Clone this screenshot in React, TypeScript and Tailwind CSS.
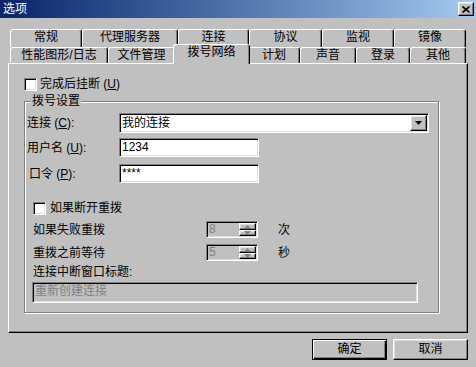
const raised =
  "border border-t-white border-l-white border-r-black border-b-black shadow-[inset_-1px_-1px_0_#808080,inset_1px_1px_0_#dfdfdf] bg-[#c0c0c0]";
const sunken =
  "border border-t-[#808080] border-l-[#808080] border-r-white border-b-white shadow-[inset_1px_1px_0_#000,inset_-1px_-1px_0_#dfdfdf]";

const Tab = ({ label, w, active }: { label: string; w: string; active?: boolean }) => {
  return (
    <div
      className={`${w} ${
        active ? "relative z-10 -mx-[2px] -mb-[1px] h-[20px]" : "h-full"
      } shrink-0 rounded-t-[3px] border-t border-l border-r border-t-white border-l-white border-r-black shadow-[inset_-1px_0_0_#808080] bg-[#c0c0c0] pt-[1px] text-center leading-[13px] whitespace-nowrap`}
    >
      {label}
    </div>
  );
};

const Check = () => <div className={`${sunken} size-[13px] bg-white shrink-0`}></div>;

const Arrow = ({ up, color }: { up?: boolean; color: string }) => (
  <svg width="7" height="4" viewBox="0 0 7 4">
    <path d={up ? "M3.5 0 L7 4 L0 4 Z" : "M0 0 L7 0 L3.5 4 Z"} fill={color} />
  </svg>
);

const Spin = ({ value }: { value: string }) => {
  return (
    <div className={`${sunken} w-[52px] h-[17px] flex bg-[#c0c0c0] p-[1px]`}>
      <span className="flex-1 pl-[1px] text-[#808080] leading-[13px]">{value}</span>
      <div className="w-[17px] flex flex-col">
        <div className={`${raised} h-[7px] flex items-center justify-center`}>
          <Arrow up color="#808080" />
        </div>
        <div className={`${raised} h-[6px] flex items-center justify-center`}>
          <Arrow color="#808080" />
        </div>
      </div>
    </div>
  );
};

const App = () => {
  return (
    <div className="w-[476px] h-[367px] overflow-hidden bg-[#c0c0c0] flex flex-col text-[12px] text-black font-['Liberation_Sans','Noto_Sans_CJK_SC',sans-serif]">
      {/* title bar */}
      <div className="h-[18px] shrink-0 flex items-center justify-between pl-[3px] pr-[2px] bg-gradient-to-r from-[#0a246a] to-[#a6caf0]">
        <span className="text-white leading-[13px]">选项</span>
        <div className={`${raised} w-[16px] h-[14px] flex items-center justify-center`}>
          <svg width="8" height="7" viewBox="0 0 8 7">
            <path d="M0.5 0.5 L7.5 6.5 M7.5 0.5 L0.5 6.5" stroke="#000" strokeWidth="1.6" />
          </svg>
        </div>
      </div>

      {/* tabs */}
      <div className="mt-[11px] pl-[10px] flex h-[18px] shrink-0">
        <Tab label="常规" w="w-[72px]" />
        <Tab label="代理服务器" w="w-[96px]" />
        <Tab label="连接" w="w-[71px]" />
        <Tab label="协议" w="w-[73px]" />
        <Tab label="监视" w="w-[72px]" />
        <Tab label="镜像" w="w-[72px]" />
      </div>
      <div className="pl-[10px] flex items-end h-[16px] shrink-0">
        <Tab label="性能图形/日志" w="w-[98px]" />
        <Tab label="文件管理" w="w-[67px]" />
        <Tab label="拨号网络" w="w-[77px]" active />
        <Tab label="计划" w="w-[52px]" />
        <Tab label="声音" w="w-[56px]" />
        <Tab label="登录" w="w-[54px]" />
        <Tab label="其他" w="w-[56px]" />
      </div>

      {/* panel */}
      <div className="ml-[8px] w-[460px] h-[270px] shrink-0 border border-t-white border-l-white border-r-black border-b-black shadow-[inset_-1px_-1px_0_#808080] pl-[15px] flex flex-col">
        <div className="mt-[14px] flex items-center gap-[3px] h-[13px]">
          <Check />
          <span className="leading-[13px]">
            完成后挂断 (<u>U</u>)
          </span>
        </div>

        {/* group box */}
        <div className="mt-[10px] w-[415px] border border-[#808080] shadow-[inset_1px_1px_0_#fff,1px_1px_0_#fff] flex flex-col pb-[9px]">
          <span className="-mt-[7px] ml-[6px] px-[1px] self-start bg-[#c0c0c0] leading-[13px]">拨号设置</span>

          <div className="mt-[5px] pl-[2px] flex items-center h-[20px]">
            <span className="w-[92px]">
              连接 (<u>C</u>):
            </span>
            <div className={`${sunken} w-[310px] h-[20px] bg-white flex items-center py-[1px] pr-[1px]`}>
              <span className="flex-1 pl-[2px] leading-[13px]">我的连接</span>
              <div className={`${raised} w-[17px] h-full flex items-center justify-center`}>
                <Arrow color="#000" />
              </div>
            </div>
          </div>

          <div className="mt-[5px] pl-[2px] flex items-center h-[19px]">
            <span className="w-[92px]">
              用户名 (<u>U</u>):
            </span>
            <div className={`${sunken} w-[140px] h-[19px] bg-white flex items-center pl-[2px] leading-[13px]`}>1234</div>
          </div>

          <div className="mt-[7px] pl-[2px] flex items-center h-[19px]">
            <span className="w-[92px] pl-[2px]">
              口令 (<u>P</u>):
            </span>
            <div className={`${sunken} w-[140px] h-[19px] bg-white flex items-center pl-[2px] leading-[13px]`}>****</div>
          </div>

          <div className="mt-[19px] pl-[8px] flex items-center gap-[4px] h-[13px]">
            <Check />
            <span className="leading-[13px]">如果断开重拨</span>
          </div>

          <div className="mt-[6px] pl-[8px] flex items-center h-[17px]">
            <span className="w-[173px]">如果失败重拨</span>
            <Spin value="8" />
            <span className="ml-[20px]">次</span>
          </div>

          <div className="mt-[6px] pl-[8px] flex items-center h-[17px]">
            <span className="w-[173px]">重拨之前等待</span>
            <Spin value="5" />
            <span className="ml-[20px]">秒</span>
          </div>

          <span className="mt-[5px] pl-[8px] leading-[13px]">连接中断窗口标题:</span>
          <div className={`${sunken} mt-[3px] ml-[7px] w-[386px] h-[21px] bg-[#c0c0c0] pl-[2px] pt-[2px] leading-[13px] text-[#808080]`}>
            重新创建连接
          </div>
        </div>
      </div>

      {/* buttons */}
      <div className="mt-[6px] flex justify-end gap-[6px] pr-[8px]">
        <button className="w-[75px] h-[21px] border border-black shadow-[inset_1px_1px_0_#fff,inset_-1px_-1px_0_#000,inset_-2px_-2px_0_#808080] bg-[#c0c0c0] leading-[13px]">
          确定
        </button>
        <button className={`${raised} w-[75px] h-[21px] leading-[13px]`}>取消</button>
      </div>
    </div>
  );
};

export default App;
